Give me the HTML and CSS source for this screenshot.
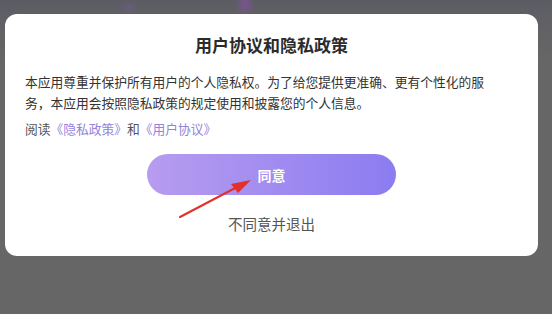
FILE: index.html
```html
<!DOCTYPE html>
<html lang="zh-CN">
<head>
<meta charset="utf-8">
<link rel="stylesheet" href="styles.css">
</head>
<body>
<div class="screen">
  <div class="blob blob-a"></div>
  <div class="blob blob-b"></div>
  <div class="dialog">
    <h1 class="title">用户协议和隐私政策</h1>
    <p class="body">本应用尊重并保护所有用户的个人隐私权。为了给您提供更准确、更有个性化的服<br>务，本应用会按照隐私政策的规定使用和披露您的个人信息。</p>
    <p class="links">阅读<a class="link">《隐私政策》</a>和<a class="link">《用户协议》</a></p>
    <button class="agree">同意</button>
    <div class="decline">不同意并退出</div>
  </div>
  <svg class="arrow" width="80" height="50" viewBox="0 0 80 50">
    <line x1="3" y1="44" x2="62" y2="13" stroke="#e3302a" stroke-width="2" stroke-linecap="round"/>
    <polygon points="74,7 54,11 61,20" fill="#e3302a"/>
  </svg>
</div>
</body>
</html>
```
FILE: styles.css
```css
html, body {
  margin: 0;
  padding: 0;
}
body {
  width: 552px;
  height: 314px;
  overflow: hidden;
  background: #656565;
  font-family: "Noto Sans CJK SC", "Noto Sans", sans-serif;
}
.screen {
  position: relative;
  width: 552px;
  height: 314px;
  background: linear-gradient(to bottom, #5b5c63 0px, #5f6065 14px, #666666 60px, #666666 100%);
  padding: 14px 14px 0 5px;
  box-sizing: border-box;
}
.blob {
  position: absolute;
  border-radius: 50%;
  filter: blur(3px);
}
.blob-a {
  left: 239px;
  top: -4px;
  width: 12px;
  height: 16px;
  background: rgba(140, 80, 170, 0.6);
}
.blob-b {
  left: 122px;
  top: 3px;
  width: 14px;
  height: 8px;
  background: rgba(130, 90, 160, 0.4);
}
.dialog {
  position: relative;
  width: 533px;
  height: 242px;
  background: #fff;
  border-radius: 12px;
  box-sizing: border-box;
  padding: 19px 20px 0 20px;
  display: flex;
  flex-direction: column;
  align-items: flex-start;
}
.title {
  align-self: stretch;
  margin: 0;
  font-size: 17px;
  line-height: 24px;
  font-weight: 700;
  color: #2b2b2b;
  text-align: center;
}
.body {
  margin: 13.5px 0 0 0;
  font-size: 12.75px;
  line-height: 21px;
  color: #333;
  white-space: nowrap;
}
.links {
  margin: 5px 0 0 0;
  font-size: 12.75px;
  line-height: 21px;
  color: #555;
}
.link {
  color: #9284dc;
}
.agree {
  align-self: center;
  margin: 15.5px 0 0 0;
  width: 249px;
  height: 41px;
  border: none;
  border-radius: 21px;
  background: linear-gradient(to right, #b79cef, #8b7cf1);
  color: #fff;
  font-family: inherit;
  font-size: 14px;
  font-weight: 700;
  padding: 0;
}
.decline {
  align-self: stretch;
  margin: 19px 0 0 0;
  text-align: center;
  font-size: 14.5px;
  line-height: 20px;
  color: #555;
}
.arrow {
  position: absolute;
  left: 177px;
  top: 173px;
}
```
